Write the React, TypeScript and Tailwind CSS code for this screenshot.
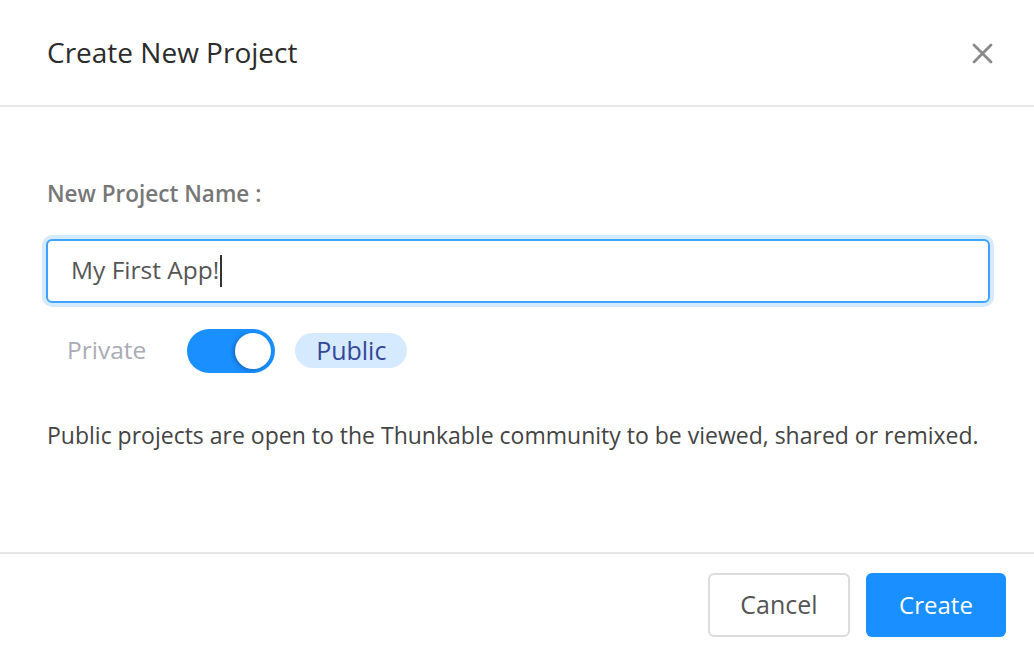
export default function App() {
  return (
    <div
      className="flex h-[652px] w-[1034px] flex-col bg-white text-[#333]"
      style={{ fontFamily: "'Open Sans', Lato, sans-serif" }}
    >
      {/* header */}
      <div className="flex h-[107px] shrink-0 items-center justify-between border-b-2 border-[#e6e6e6] pl-[47px] pr-[41px]">
        <h1 className="pb-[1px] text-[28px] font-normal leading-none text-[#2b2b2b]">
          Create New Project
        </h1>
        <button className="pt-[2px] text-[#8a8a8a]">
          <svg width="21" height="21" viewBox="0 0 21 21" fill="none" stroke="currentColor" strokeWidth="2.8" strokeLinecap="round">
            <path d="M2 2L19 19M19 2L2 19" />
          </svg>
        </button>
      </div>

      {/* body */}
      <div className="flex flex-1 flex-col pl-[46px] pr-[44px] pt-[76px]">
        <label className="pl-[1px] text-[22.5px] font-semibold leading-none text-[#777]">
          New Project Name :
        </label>

        <div className="mt-[33px] flex h-[64px] items-center rounded-[6px] border-2 border-[#3fa2ff] bg-white pl-[23px] shadow-[0_0_0_4px_#d6eaff]">
          <span className="text-[24.5px] leading-none text-[#555]">My First App!</span>
          <span className="ml-[1px] h-[32px] w-[2px] bg-[#333]" />
        </div>

        <div className="mt-[26px] flex items-center pl-[21px]">
          <span className="text-[24.5px] leading-none text-[#a9abb6]">Private</span>
          <div className="ml-[41px] flex h-[44px] w-[88px] items-center justify-end rounded-full bg-[#1a8fff] pr-[4px]">
            <span className="h-[36px] w-[36px] rounded-full bg-white shadow-[-2px_1px_4px_rgba(0,0,0,0.25)]" />
          </div>
          <span className="ml-[20px] flex h-[35px] w-[112px] items-center justify-center rounded-full bg-[#d6eaff] text-[25px] font-medium leading-none text-[#34479a]">
            Public
          </span>
        </div>

        <p className="mt-[51px] pl-[1px] text-[23px] leading-none text-[#444]">
          Public projects are open to the Thunkable community to be viewed, shared or remixed.
        </p>
      </div>

      {/* footer */}
      <div className="flex h-[100px] shrink-0 items-center justify-end gap-[16px] border-t-2 border-[#e6e6e6] pr-[28px] pt-[4px]">
        <button className="h-[64px] w-[142px] rounded-[6px] border-2 border-[#dcdcdc] bg-white text-[25px] text-[#555]">
          Cancel
        </button>
        <button className="h-[64px] w-[140px] rounded-[6px] bg-[#1a8fff] text-[24px] text-white">
          Create
        </button>
      </div>
    </div>
  );
}
